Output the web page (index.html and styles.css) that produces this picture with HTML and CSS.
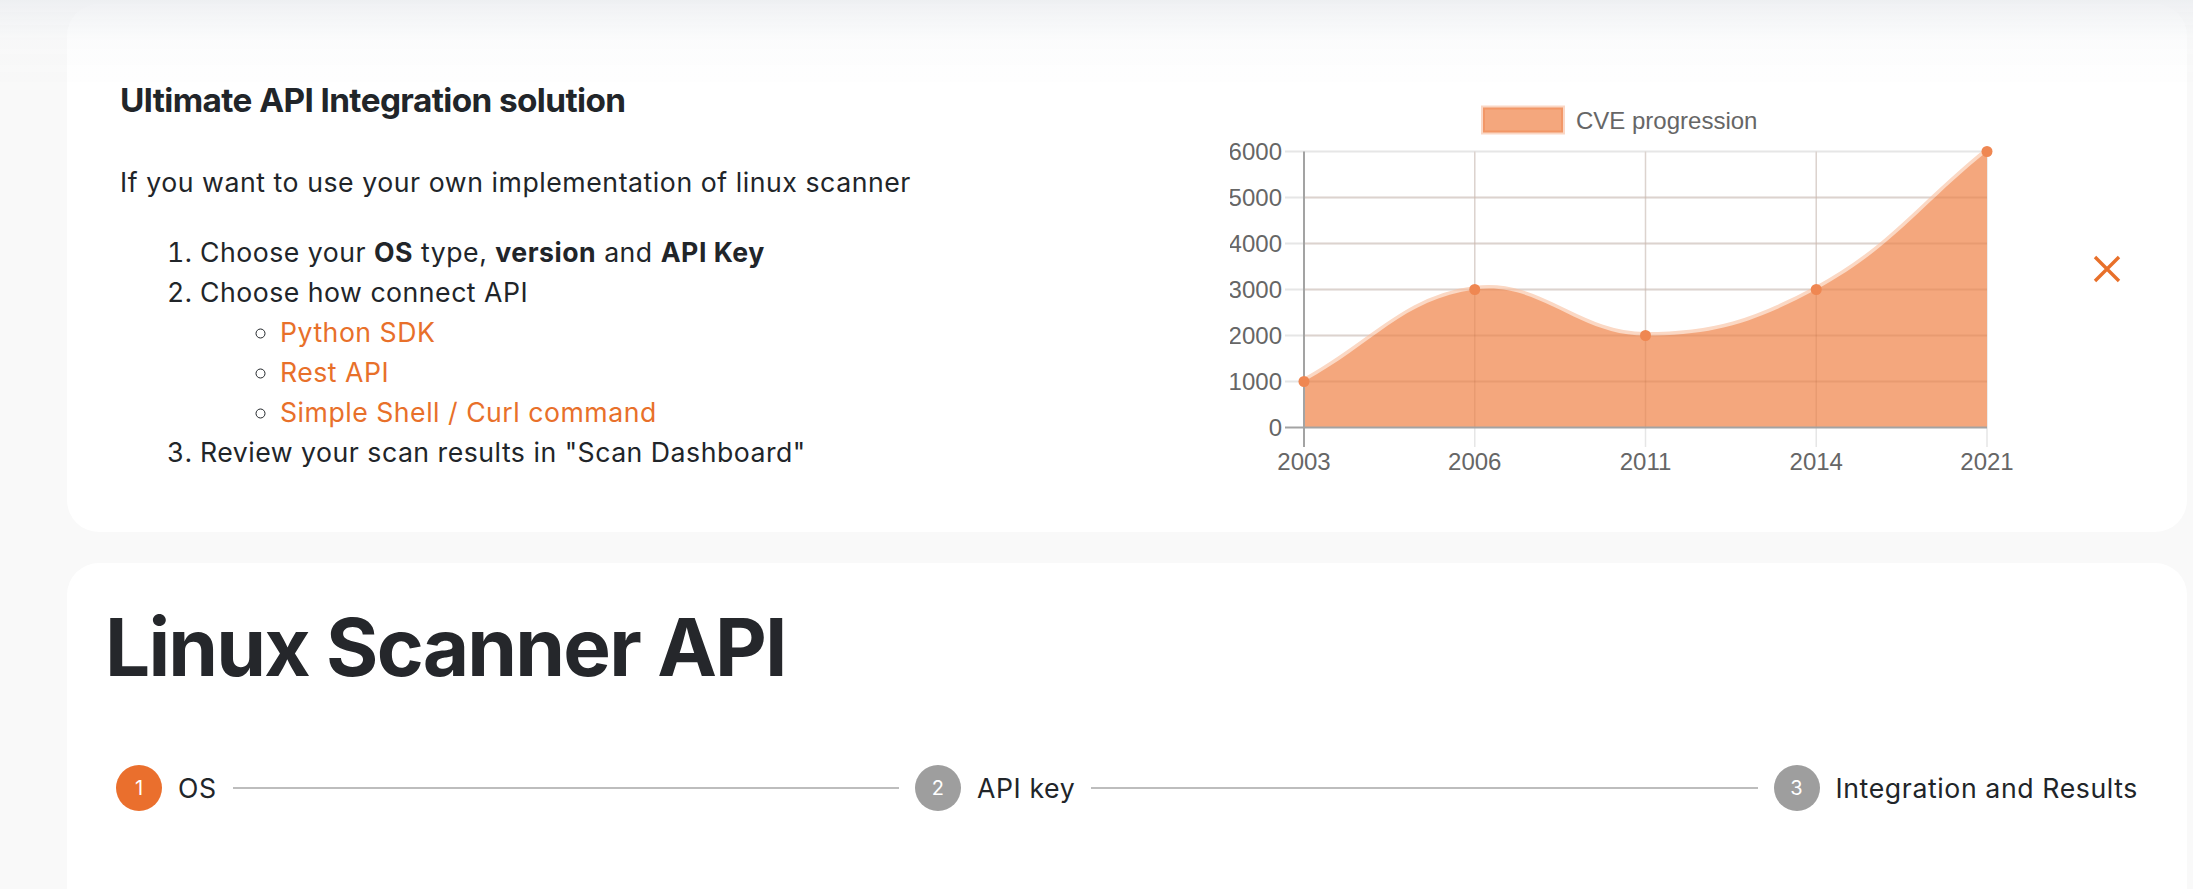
FILE: index.html
```html
<!DOCTYPE html>
<html lang="en">
<head>
<meta charset="utf-8">
<title>Linux Scanner API</title>
<link rel="stylesheet" href="styles.css">
</head>
<body>
<div class="page">
  <section class="card card-info">
    <div class="info-text">
      <h5 class="info-title">Ultimate API Integration solution</h5>
      <p class="info-lead">If you want to use your own implementation of linux scanner</p>
      <ol class="steps-list">
        <li>Choose your <b>OS</b> type, <b>version</b> and <b>API Key</b></li>
        <li>Choose how connect API
          <ul class="sub-list">
            <li><a class="link" href="#">Python SDK</a></li>
            <li><a class="link" href="#">Rest API</a></li>
            <li><a class="link" href="#">Simple Shell / Curl command</a></li>
          </ul>
        </li>
        <li>Review your scan results in "Scan Dashboard"</li>
      </ol>
    </div>
    <svg class="chart" viewBox="1230 90 800 400" width="800" height="400">
      <!-- legend -->
      <rect x="1483" y="107.5" width="80" height="25" fill="#f4a77d" stroke="rgba(236,110,45,0.28)" stroke-width="4"/>
      <text class="chart-text" x="1576" y="129">CVE progression</text>
      <!-- light grid (under) -->
      <g stroke="#e6e6e6" stroke-width="2">
        <line x1="1285" y1="151.5" x2="1987" y2="151.5"/>
        <line x1="1285" y1="197.5" x2="1987" y2="197.5"/>
        <line x1="1285" y1="243.5" x2="1987" y2="243.5"/>
        <line x1="1285" y1="289.5" x2="1987" y2="289.5"/>
        <line x1="1285" y1="335.5" x2="1987" y2="335.5"/>
        <line x1="1285" y1="381.5" x2="1987" y2="381.5"/>
      </g>
      <g stroke="#e6e6e6" stroke-width="1.5">
        <line x1="1474.75" y1="151.5" x2="1474.75" y2="447"/>
        <line x1="1645.5" y1="151.5" x2="1645.5" y2="447"/>
        <line x1="1816.25" y1="151.5" x2="1816.25" y2="447"/>
        <line x1="1987" y1="151.5" x2="1987" y2="447"/>
      </g>
      <!-- curve halo -->
      <path d="M1304,381.5 C1372.3,344.7 1403.3,299.1 1474.75,289.5 C1539.9,280.7 1577.2,335.5 1645.5,335.5 C1713.8,335.5 1755.3,322.3 1816.25,289.5 C1891.9,248.7 1918.7,206.7 1987,151.5" fill="none" stroke="#fbd8c4" stroke-width="7"/>
      <!-- area -->
      <path d="M1304,381.5 C1372.3,344.7 1403.3,299.1 1474.75,289.5 C1539.9,280.7 1577.2,335.5 1645.5,335.5 C1713.8,335.5 1755.3,322.3 1816.25,289.5 C1891.9,248.7 1918.7,206.7 1987,151.5 L1987,427.5 L1304,427.5 Z" fill="#f4a77d"/>
      <!-- grid over area -->
      <g stroke="rgba(150,70,30,0.12)" stroke-width="2">
        <line x1="1304" y1="289.5" x2="1987" y2="289.5"/>
        <line x1="1304" y1="335.5" x2="1987" y2="335.5"/>
        <line x1="1304" y1="381.5" x2="1987" y2="381.5"/>
        <line x1="1304" y1="243.5" x2="1987" y2="243.5"/>
        <line x1="1304" y1="197.5" x2="1987" y2="197.5"/>
      </g>
      <g stroke="rgba(150,70,30,0.12)" stroke-width="1.5">
        <line x1="1474.75" y1="151.5" x2="1474.75" y2="427"/>
        <line x1="1645.5" y1="151.5" x2="1645.5" y2="427"/>
        <line x1="1816.25" y1="151.5" x2="1816.25" y2="427"/>
      </g>
      <!-- axes -->
      <line x1="1304" y1="151.5" x2="1304" y2="447" stroke="#a3a3a3" stroke-width="2"/>
      <line x1="1285" y1="427.5" x2="1987" y2="427.5" stroke="#a3a3a3" stroke-width="2"/>
      <!-- points -->
      <g fill="#ef8752">
        <circle cx="1304" cy="381.5" r="5.5"/>
        <circle cx="1474.75" cy="289.5" r="5.5"/>
        <circle cx="1645.5" cy="335.5" r="5.5"/>
        <circle cx="1816.25" cy="289.5" r="5.5"/>
        <circle cx="1987" cy="151.5" r="5.5"/>
      </g>
      <!-- y labels -->
      <g class="chart-text" text-anchor="end">
        <text x="1282" y="160">6000</text>
        <text x="1282" y="206">5000</text>
        <text x="1282" y="252">4000</text>
        <text x="1282" y="298">3000</text>
        <text x="1282" y="344">2000</text>
        <text x="1282" y="390">1000</text>
        <text x="1282" y="436">0</text>
      </g>
      <!-- x labels -->
      <g class="chart-text" text-anchor="middle">
        <text x="1304" y="470">2003</text>
        <text x="1474.75" y="470">2006</text>
        <text x="1645.5" y="470">2011</text>
        <text x="1816.25" y="470">2014</text>
        <text x="1987" y="470">2021</text>
      </g>
    </svg>
    <button class="close" type="button" aria-label="Close">
      <svg viewBox="0 0 28 28" width="28" height="28">
        <path d="M2 2 L26 26 M26 2 L2 26" stroke="#e8702a" stroke-width="3.4" fill="none"/>
      </svg>
    </button>
  </section>

  <section class="card card-main">
    <h1 class="main-title">Linux Scanner API</h1>
    <div class="stepper">
      <div class="step">
        <span class="step-icon active">1</span>
        <span class="step-label">OS</span>
      </div>
      <div class="connector"></div>
      <div class="step">
        <span class="step-icon">2</span>
        <span class="step-label">API key</span>
      </div>
      <div class="connector"></div>
      <div class="step">
        <span class="step-icon">3</span>
        <span class="step-label">Integration and Results</span>
      </div>
    </div>
  </section>
</div>
<div class="top-fade"></div>
</body>
</html>
```

FILE: styles.css
```css
* { box-sizing: border-box; }

html, body {
  margin: 0;
  padding: 0;
}

body {
  background: #f9f9f9;
  font-family: Inter, "Noto Sans", "Liberation Sans", sans-serif;
  color: #212529;
  overflow: hidden;
}

.page {
  padding: 4px 6px 0 67px;
}

.card {
  background: #ffffff;
  border-radius: 32px;
}

.card-info {
  display: flex;
  align-items: flex-start;
  padding: 76px 66px 60px 53px;
}

.info-text {
  width: 1110px;
  flex: none;
}

.info-title {
  margin: 0 0 42px;
  font-size: 33.33px;
  line-height: 40px;
  font-weight: 700;
  letter-spacing: -0.6px;
  color: #212529;
}

.info-lead {
  margin: 0 0 30px;
  font-size: 26.67px;
  line-height: 40px;
  letter-spacing: 0.55px;
}

.steps-list {
  margin: 0;
  padding-left: 80px;
  font-size: 26.67px;
  line-height: 40px;
  letter-spacing: 0.5px;
}

.steps-list b {
  font-weight: 700;
}

.sub-list {
  margin: 0;
  padding-left: 80px;
  list-style: circle;
}

.link {
  color: #e8702a;
  text-decoration: none;
}

.chart {
  flex: none;
  display: block;
  margin-top: 10px;
  margin-bottom: -18px;
}

.chart-text {
  font-family: "Liberation Sans", Arial, sans-serif;
  font-size: 24px;
  letter-spacing: 0;
  fill: #666666;
}

.close {
  margin-left: auto;
  margin-top: 175px;
  width: 28px;
  height: 28px;
  padding: 0;
  border: 0;
  background: transparent;
  flex: none;
}

.close svg {
  display: block;
}

.card-main {
  margin-top: 31px;
  padding: 36px 49px 200px 38px;
}

.main-title {
  margin: 0 0 70px;
  font-size: 80px;
  line-height: 96px;
  font-weight: 700;
  color: #25272b;
  letter-spacing: -1.8px;
}

.stepper {
  display: flex;
  align-items: center;
  padding-left: 11px;
}

.step {
  display: flex;
  align-items: center;
  gap: 16px;
  flex: none;
}

.step-icon {
  width: 46px;
  height: 46px;
  border-radius: 50%;
  background: #9e9e9e;
  color: #ffffff;
  font-size: 20px;
  display: flex;
  align-items: center;
  justify-content: center;
}

.step-icon.active {
  background: #ea6f2d;
}

.step-label {
  font-size: 26.67px;
  line-height: 40px;
  letter-spacing: 0.6px;
  color: #212529;
}

.connector {
  flex: 1;
  height: 2px;
  background: #bdbdbd;
  margin: 0 16px;
}

.top-fade {
  position: fixed;
  top: 0;
  left: 0;
  right: 0;
  height: 90px;
  background: linear-gradient(to bottom, rgba(236, 238, 241, 0.85), rgba(246, 247, 248, 0.4) 45%, rgba(255, 255, 255, 0));
  pointer-events: none;
}
```
